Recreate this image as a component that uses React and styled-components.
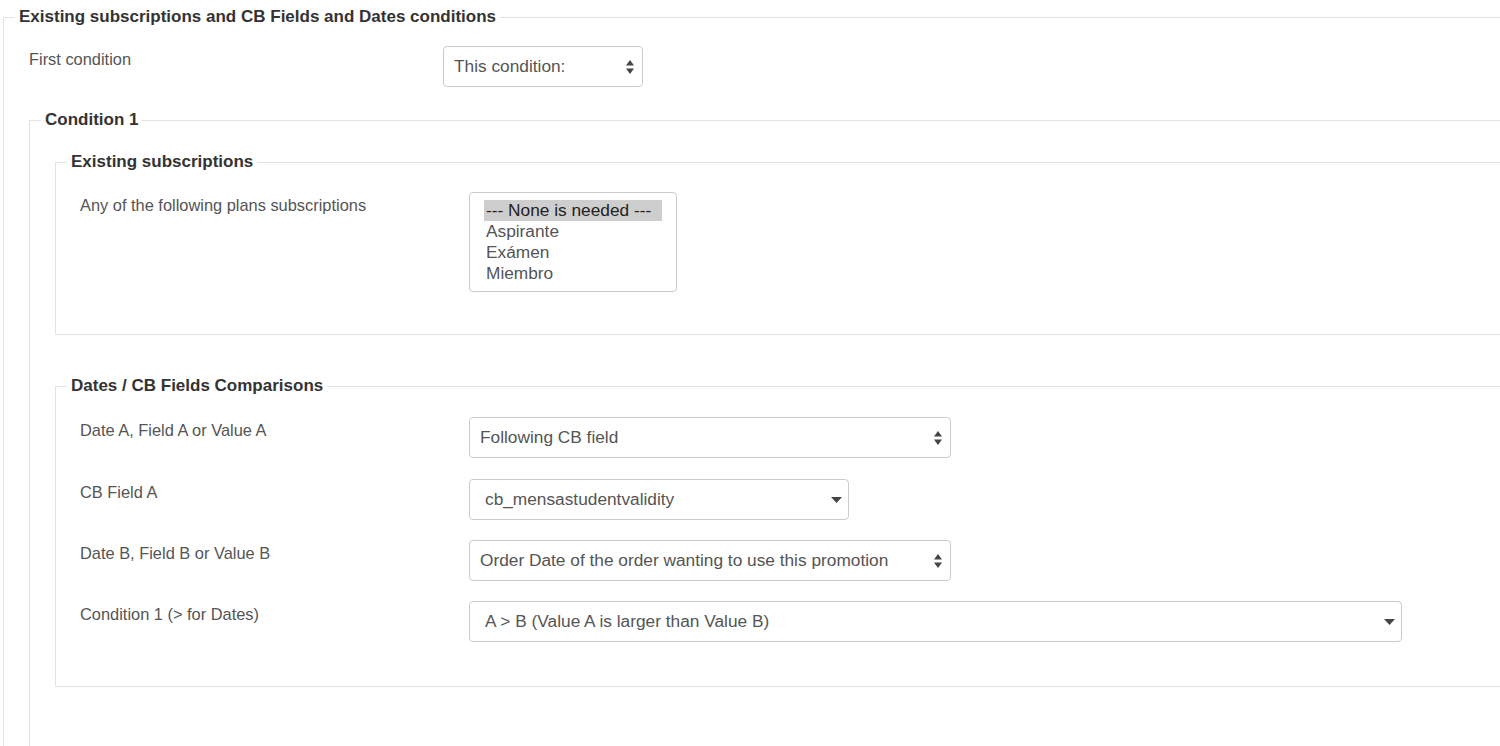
import React from "react";
import styled, { createGlobalStyle } from "styled-components";

const GlobalStyle = createGlobalStyle`
  html, body { margin: 0; padding: 0; background: #fff; overflow: hidden; }
  body { font-family: "Liberation Sans", Arial, Helvetica, sans-serif; }
  * { box-sizing: border-box; }
`;

const Page = styled.div`
  padding: 7px 0 0 3px;
  width: 1500px;
  height: 746px;
  overflow: hidden;
`;

const Fieldset = styled.fieldset`
  margin: ${(p) => p.$mt || 0}px 0 0 0;
  padding: 0 0 ${(p) => p.$pb || 0}px ${(p) => p.$pl || 25}px;
  border: 1px solid #e3e3e3;
  min-width: 0;
  ${(p) => (p.$width ? `width: ${p.$width}px;` : "")}
`;

const Legend = styled.legend`
  font-size: 17px;
  font-weight: bold;
  line-height: 20px;
  color: #333;
  padding: 0 4px;
  margin-left: ${(p) => -(p.$pl || 25) + 11}px;
`;

const Row = styled.div`
  display: grid;
  grid-template-columns: ${(p) => p.$labelWidth}px auto;
  margin-top: ${(p) => (p.$mt === undefined ? 20 : p.$mt)}px;
  align-items: start;
`;

const Label = styled.div`
  font-size: 16.4px;
  line-height: 20px;
  color: #555;
  padding-top: 3px;
`;

const SelectBox = styled.div`
  width: ${(p) => p.$w}px;
  height: 41px;
  border: 1px solid #cccccc;
  border-radius: 4px;
  background: #fff;
  display: flex;
  align-items: center;
  padding-left: ${(p) => p.$pl || 10}px;
  font-size: 17.3px;
  color: #555;
  white-space: nowrap;
`;

const SelectText = styled.span`
  flex: 1;
`;

const ArrowWrap = styled.span`
  display: flex;
  align-items: center;
  margin-right: ${(p) => p.$mr}px;
`;

const ListBox = styled.div`
  width: 208px;
  height: 100px;
  border: 1px solid #cccccc;
  border-radius: 4px;
  padding: 7px 14px 0 14px;
  overflow-y: auto;
  scrollbar-width: none;
  &::-webkit-scrollbar { display: none; }
  font-size: 17.3px;
  line-height: 21px;
  color: #555;
`;

const Option = styled.div`
  padding: 0 2px;
  white-space: nowrap;
  background: ${(p) => (p.$selected ? "#cecece" : "transparent")};
  color: ${(p) => (p.$selected ? "#222" : "#555")};
`;

const UpDown = () => (
  <svg width="8" height="14" viewBox="0 0 8 14">
    <path d="M4 0 L8 5.5 L0 5.5 Z" fill="#444" />
    <path d="M0 8.5 L8 8.5 L4 14 Z" fill="#444" />
  </svg>
);

const Down = () => (
  <svg width="11" height="6" viewBox="0 0 11 6">
    <path d="M0 0 L11 0 L5.5 6 Z" fill="#444" />
  </svg>
);

const Select = ({ w, text, kind = "updown", pl }) => (
  <SelectBox $w={w} $pl={pl}>
    <SelectText>{text}</SelectText>
    {kind === "updown" ? (
      <ArrowWrap $mr={8}>
        <UpDown />
      </ArrowWrap>
    ) : (
      <ArrowWrap $mr={6}>
        <Down />
      </ArrowWrap>
    )}
  </SelectBox>
);

const plans = ["Aspirante", "Exámen", "Miembro", "menores"];

export default function App() {
  return (
    <Page>
      <GlobalStyle />
      <Fieldset $width={1708} $pb={200}>
        <Legend>Existing subscriptions and CB Fields and Dates conditions</Legend>
        <Row $labelWidth={414} $mt={19}>
          <Label>First condition</Label>
          <Select w={200} text="This condition:" pl={10} />
        </Row>

        <Fieldset $mt={23} $pb={120}>
          <Legend>Condition 1</Legend>

          <Fieldset $mt={22} $pb={42} $pl={24}>
            <Legend $pl={24}>Existing subscriptions</Legend>
            <Row $labelWidth={389} $mt={20}>
              <Label>Any of the following plans subscriptions</Label>
              <ListBox>
                <Option $selected>--- None is needed ---</Option>
                {plans.map((p) => (
                  <Option key={p}>{p}</Option>
                ))}
              </ListBox>
            </Row>
          </Fieldset>

          <Fieldset $mt={41} $pb={44} $pl={24}>
            <Legend $pl={24}>Dates / CB Fields Comparisons</Legend>
            <Row $labelWidth={389} $mt={21}>
              <Label>Date A, Field A or Value A</Label>
              <Select w={482} text="Following CB field" pl={10} />
            </Row>
            <Row $labelWidth={389} $mt={21}>
              <Label>CB Field A</Label>
              <Select w={380} text="cb_mensastudentvalidity" kind="down" pl={15} />
            </Row>
            <Row $labelWidth={389} $mt={20}>
              <Label>Date B, Field B or Value B</Label>
              <Select
                w={482}
                text="Order Date of the order wanting to use this promotion"
                pl={10}
              />
            </Row>
            <Row $labelWidth={389} $mt={20}>
              <Label>Condition 1 (&gt; for Dates)</Label>
              <Select
                w={933}
                text="A > B (Value A is larger than Value B)"
                kind="down"
                pl={15}
              />
            </Row>
          </Fieldset>
        </Fieldset>
      </Fieldset>
    </Page>
  );
}
